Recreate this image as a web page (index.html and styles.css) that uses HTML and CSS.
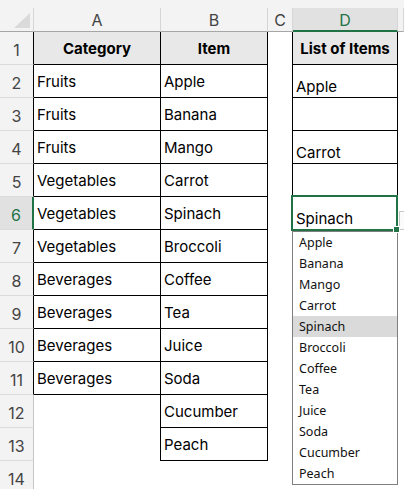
FILE: index.html
```html
<!DOCTYPE html>
<html>
<head>
<meta charset="utf-8">
<link rel="stylesheet" href="styles.css">
</head>
<body>
<div class="strip"></div>
<div class="sheet">
  <div class="grid">
    <div class="corner"><span class="tri"></span></div>
    <div class="ch">A</div>
    <div class="ch">B</div>
    <div class="ch">C</div>
    <div class="ch sel">D</div>
    <div class="ch"></div>

    <div class="rh k">1</div>
    <div class="c bd hd">Category</div>
    <div class="c bd hd">Item</div>
    <div class="c br"></div>
    <div class="c bd hd">List of Items</div>
    <div class="c"></div>

    <div class="rh k">2</div>
    <div class="c bd">Fruits</div>
    <div class="c bd">Apple</div>
    <div class="c br"></div>
    <div class="c bd v">Apple</div>
    <div class="c"></div>

    <div class="rh k">3</div>
    <div class="c bd">Fruits</div>
    <div class="c bd">Banana</div>
    <div class="c br"></div>
    <div class="c bd v"></div>
    <div class="c"></div>

    <div class="rh k">4</div>
    <div class="c bd">Fruits</div>
    <div class="c bd">Mango</div>
    <div class="c br"></div>
    <div class="c bd v">Carrot</div>
    <div class="c"></div>

    <div class="rh k">5</div>
    <div class="c bd">Vegetables</div>
    <div class="c bd">Carrot</div>
    <div class="c br"></div>
    <div class="c bd v"></div>
    <div class="c"></div>

    <div class="rh k sel">6</div>
    <div class="c bd">Vegetables</div>
    <div class="c bd">Spinach</div>
    <div class="c br"></div>
    <div class="c bd v">Spinach</div>
    <div class="c"></div>

    <div class="rh k">7</div>
    <div class="c bd">Vegetables</div>
    <div class="c bd">Broccoli</div>
    <div class="c"></div>
    <div class="c"></div>
    <div class="c"></div>

    <div class="rh k">8</div>
    <div class="c bd">Beverages</div>
    <div class="c bd">Coffee</div>
    <div class="c"></div>
    <div class="c"></div>
    <div class="c"></div>

    <div class="rh k">9</div>
    <div class="c bd">Beverages</div>
    <div class="c bd">Tea</div>
    <div class="c"></div>
    <div class="c"></div>
    <div class="c"></div>

    <div class="rh k">10</div>
    <div class="c bd">Beverages</div>
    <div class="c bd">Juice</div>
    <div class="c"></div>
    <div class="c"></div>
    <div class="c"></div>

    <div class="rh k">11</div>
    <div class="c bd">Beverages</div>
    <div class="c bd">Soda</div>
    <div class="c"></div>
    <div class="c"></div>
    <div class="c"></div>

    <div class="rh">12</div>
    <div class="c br"></div>
    <div class="c bd">Cucumber</div>
    <div class="c"></div>
    <div class="c"></div>
    <div class="c"></div>

    <div class="rh">13</div>
    <div class="c br"></div>
    <div class="c bd">Peach</div>
    <div class="c"></div>
    <div class="c"></div>
    <div class="c"></div>

    <div class="rh">14</div>
    <div class="c"></div>
    <div class="c"></div>
    <div class="c"></div>
    <div class="c"></div>
    <div class="c"></div>
  </div>

  <div class="selection"></div>
  <div class="handle"></div>
  <div class="ddbtn"></div>
  <ul class="dropdown">
    <li>Apple</li>
    <li>Banana</li>
    <li>Mango</li>
    <li>Carrot</li>
    <li class="hl">Spinach</li>
    <li>Broccoli</li>
    <li>Coffee</li>
    <li>Tea</li>
    <li>Juice</li>
    <li>Soda</li>
    <li>Cucumber</li>
    <li>Peach</li>
  </ul>
</div>
</body>
</html>
```

FILE: styles.css
```css
html, body {
  margin: 0;
  padding: 0;
  background: #ffffff;
  overflow: hidden;
  width: 404px;
  height: 489px;
}

.strip {
  height: 8px;
  background: #f3f3f3;
}

.sheet {
  position: relative;
  width: 404px;
  overflow: hidden;
}

.grid {
  display: grid;
  grid-template-columns: 34px 127px 107px 25px 105px 6px;
  grid-template-rows: 24px repeat(14, 33px);
}

.corner {
  box-sizing: border-box;
  background: #f3f3f3;
  border-right: 1px solid #d6d6d6;
  border-bottom: 1px solid #a6a6a6;
  display: flex;
  justify-content: flex-end;
  align-items: flex-end;
  padding: 0 3px 3px 0;
}

.tri {
  width: 0;
  height: 0;
  border-left: 16px solid transparent;
  border-bottom: 15px solid #dadada;
}

.ch {
  box-sizing: border-box;
  background: #f3f3f3;
  border-right: 1px solid #d6d6d6;
  border-bottom: 1px solid #a6a6a6;
  display: flex;
  align-items: center;
  justify-content: center;
  font: 16px "Inter", "Noto Sans", sans-serif;
  color: #444444;
  padding-top: 1px;
}

.ch.sel {
  background: #e1e1e1;
  color: #217346;
  border-bottom: 2px solid #217346;
}

.rh {
  box-sizing: border-box;
  background: #f3f3f3;
  border-right: 1px solid #c6c6c6;
  border-bottom: 1px solid #dcdcdc;
  display: flex;
  align-items: center;
  justify-content: center;
  font: 16px "Inter", "Noto Sans", sans-serif;
  color: #444444;
  padding-top: 4px;
}

.rh.k {
  border-right-color: #000000;
}

.rh.sel {
  background: #e1e1e1;
  color: #217346;
  border-right: 2px solid #217346;
}

.c {
  box-sizing: border-box;
  display: flex;
  align-items: center;
  padding-left: 3px;
  font: 15px "Inter", "Noto Sans", sans-serif;
  color: #000000;
  white-space: nowrap;
  overflow: hidden;
}

.bd {
  border-right: 1px solid #000000;
  border-bottom: 1px solid #000000;
}

.br {
  border-right: 1px solid #000000;
}

.hd {
  background: #e8e8e8;
  font-weight: 700;
  justify-content: center;
  padding-left: 0;
}

.v {
  align-items: flex-end;
  padding-bottom: 0;
  line-height: 20px;
}

.selection {
  position: absolute;
  left: 291px;
  top: 187px;
  width: 107px;
  height: 36px;
  box-sizing: border-box;
  border: 2px solid #217346;
  z-index: 3;
}

.handle {
  position: absolute;
  left: 393px;
  top: 218px;
  width: 5px;
  height: 5px;
  background: #217346;
  border: 1px solid #ffffff;
  z-index: 4;
}

.ddbtn {
  position: absolute;
  left: 399px;
  top: 203px;
  width: 5px;
  height: 19px;
  box-sizing: border-box;
  background: #fbfbfb;
  border: 1px solid #c8c8c8;
  border-right: none;
  z-index: 2;
}

.dropdown {
  position: absolute;
  left: 292px;
  top: 223px;
  width: 106px;
  box-sizing: border-box;
  margin: 0;
  padding: 0;
  list-style: none;
  background: #ffffff;
  border: 1px solid #7f7f7f;
  z-index: 2;
}

.dropdown li {
  height: 21px;
  padding-left: 6px;
  font: 12.5px "Noto Sans", "Open Sans", sans-serif;
  line-height: 21px;
  color: #111111;
}

.dropdown li.hl {
  background: #dadada;
}
```
